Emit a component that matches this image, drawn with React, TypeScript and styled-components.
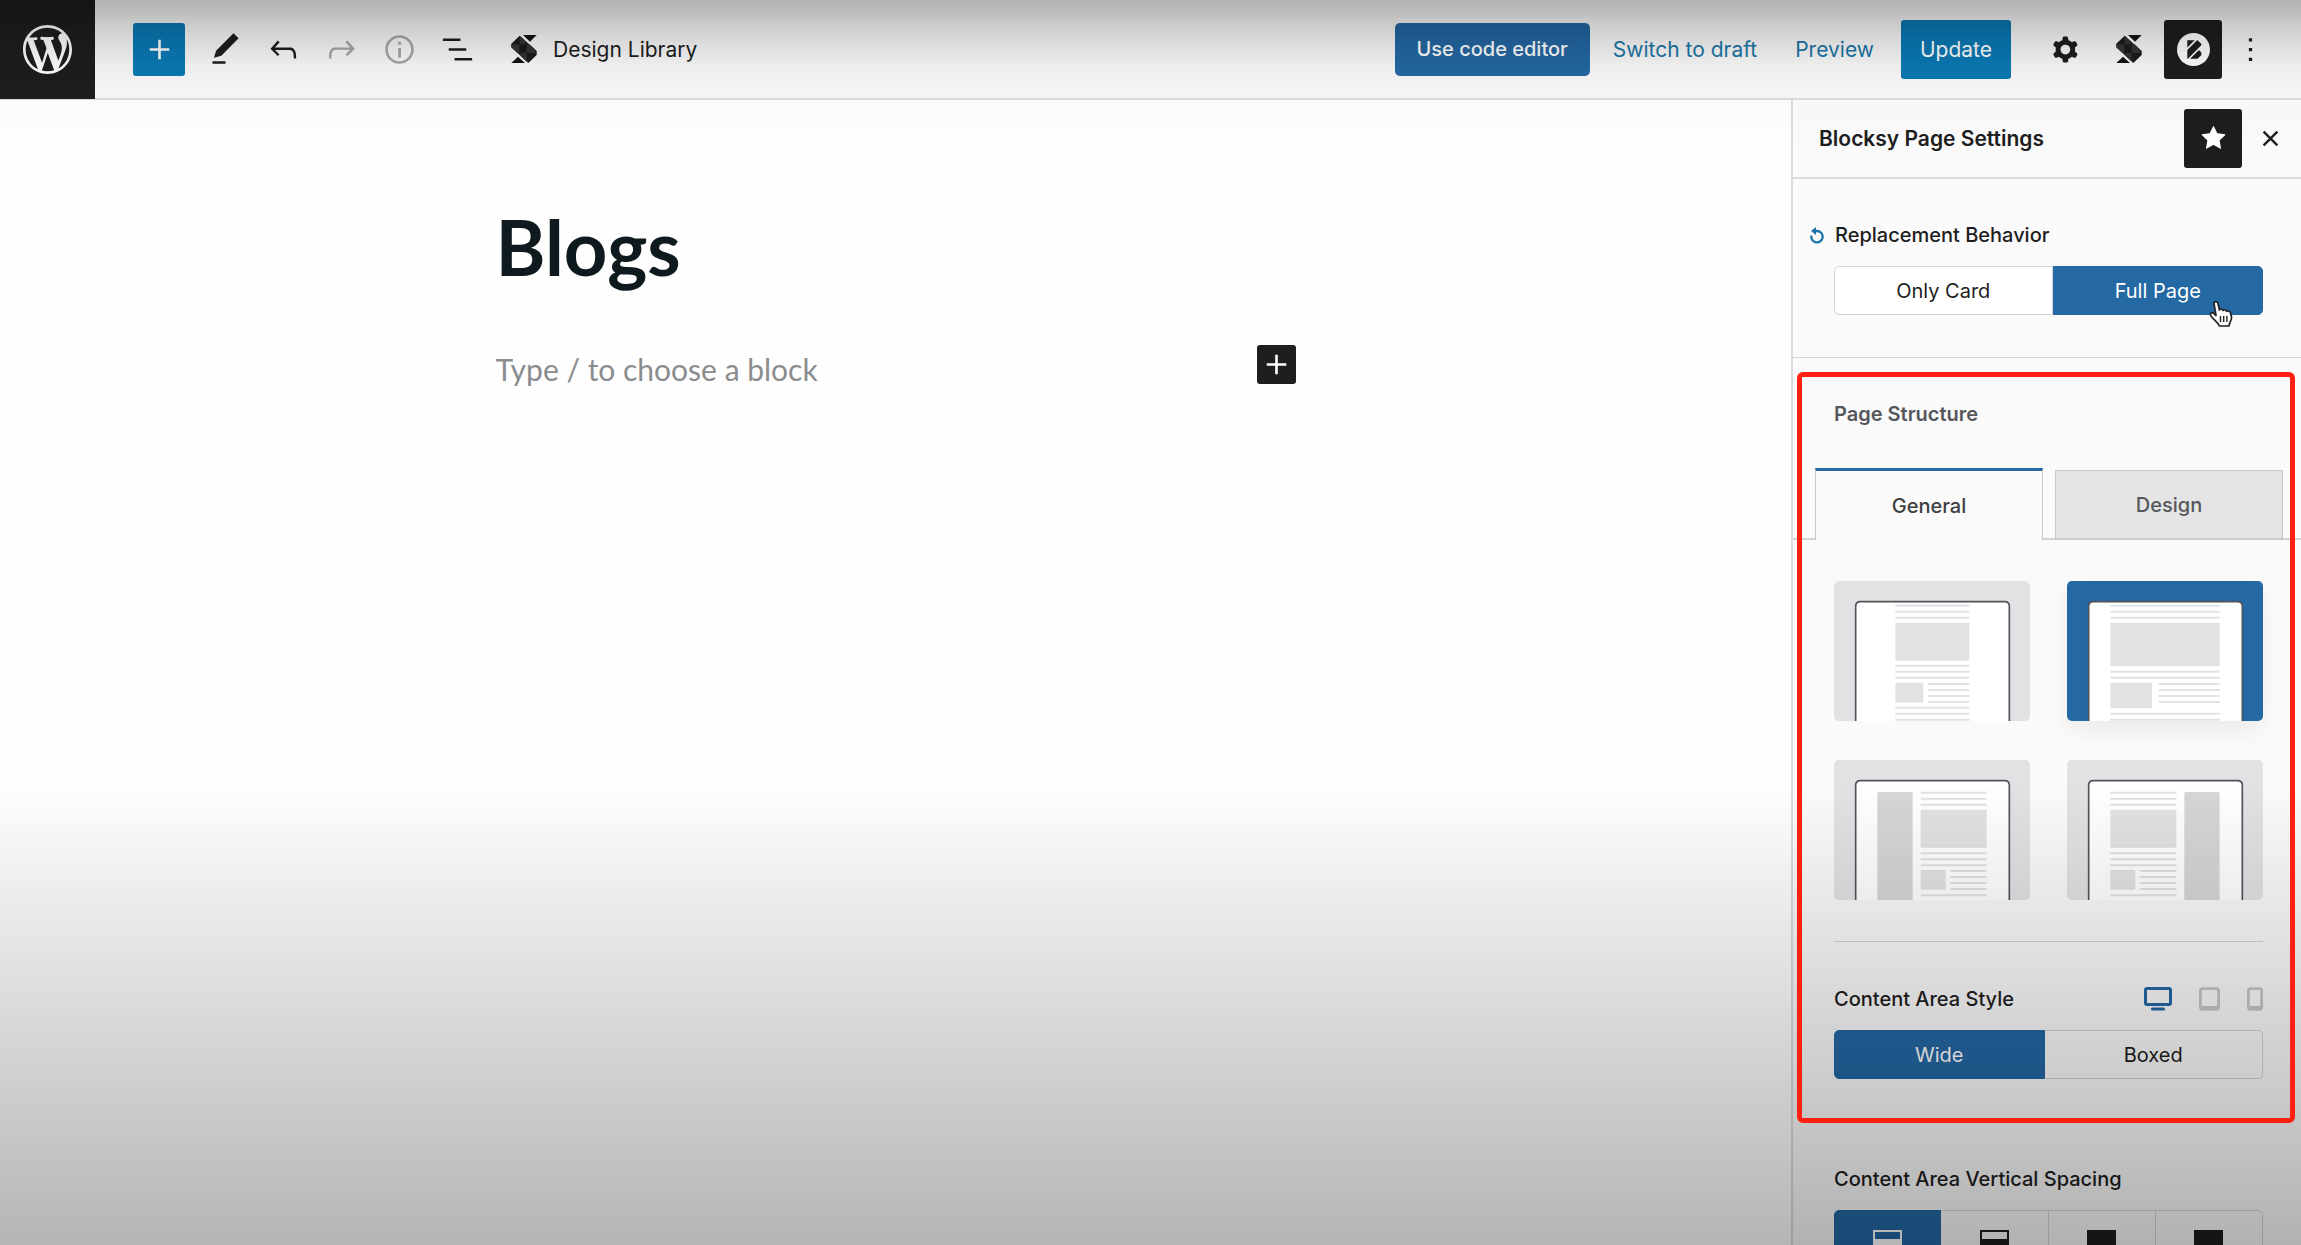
import React from "react";
import styled, { createGlobalStyle, css } from "styled-components";

const ink = "#1e1e1e";
const blue = "#2468a4";
const line = "#dcdcdc";

const GlobalStyle = createGlobalStyle`
  *, *::before, *::after { box-sizing: border-box; }
  body { margin: 0; background: #fefefe; }
  body, button, input { font-family: Inter, Roboto, "Liberation Sans", sans-serif; }
  button { margin: 0; padding: 0; border: 0; background: none; color: inherit; cursor: pointer; }
  h1, h2, h3, p { margin: 0; }
  svg { display: block; }
`;

const Page = styled.div`
  display: flex;
  flex-direction: column;
  height: 100vh;
  overflow: hidden;
  color: ${ink};
`;

const Shade = styled.div`
  position: fixed;
  inset: 0;
  z-index: 10;
  pointer-events: none;
  background:
    linear-gradient(rgba(0, 0, 0, 0.29), rgba(0, 0, 0, 0.14) 36px, rgba(0, 0, 0, 0.05) 66px, rgba(0, 0, 0, 0.01) 100px, transparent 150px),
    linear-gradient(transparent 63%, rgba(0, 0, 0, 0.285));
`;

const TopBar = styled.header`
  display: flex;
  align-items: center;
  justify-content: space-between;
  flex: none;
  height: 100px;
  padding-right: 31px;
  background: #fafafa;
  border-bottom: 2px solid ${line};
`;

const BarGroup = styled.div`
  display: flex;
  align-items: center;
`;

const Home = styled.a`
  display: grid;
  place-items: center;
  width: 95px;
  height: 99px;
  margin-right: 38px;
  background: ${ink};
  color: #fff;
`;

const IconButton = styled.button<{ $dim?: boolean; $dark?: boolean; $narrow?: boolean }>`
  display: grid;
  place-items: center;
  width: ${(p) => (p.$narrow ? 40 : 58)}px;
  height: 59px;
  border-radius: 3px;
  color: ${(p) => (p.$dark ? "#fff" : p.$dim ? "#a8a8a8" : ink)};
  ${(p) => p.$dark && css`background: ${ink};`}
`;

const AddButton = styled.button<{ $dark?: boolean }>`
  display: grid;
  place-items: center;
  flex: none;
  width: ${(p) => (p.$dark ? 39 : 52)}px;
  height: ${(p) => (p.$dark ? 39 : 53)}px;
  border-radius: 3px;
  background: ${(p) => (p.$dark ? ink : "#0a7ab5")};
  color: #fff;
`;

const Tools = styled.div`
  display: flex;
  margin-left: 11px;
`;

const Library = styled.button`
  display: flex;
  align-items: center;
  gap: 16px;
  margin-left: 25px;
  font-size: 21px;
`;

const Primary = styled.button<{ $tall?: boolean }>`
  height: ${(p) => (p.$tall ? 59 : 53)}px;
  padding: 0 ${(p) => (p.$tall ? 19 : 22)}px;
  border-radius: ${(p) => (p.$tall ? 3 : 5)}px;
  background: ${(p) => (p.$tall ? "#0a7ab5" : blue)};
  color: #fff;
  font-size: ${(p) => (p.$tall ? 21 : 20)}px;
  font-weight: ${(p) => (p.$tall ? 400 : 500)};
`;

const BarLink = styled.a`
  color: #1a76a8;
  font-size: 21px;
  text-decoration: none;
`;

const Actions = styled.div`
  display: flex;
  align-items: center;
  gap: 23px;
  margin-right: 25px;
  ${BarLink} + ${BarLink} { margin-left: 15px; }
  ${Primary}:last-child { margin-left: 4px; }
`;

const Spacer = styled.span<{ $wide?: boolean }>`
  flex: none;
  width: ${(p) => (p.$wide ? 8 : 6)}px;
`;

const Workspace = styled.div`
  display: flex;
  flex: 1;
  min-height: 0;
`;

const Canvas = styled.main`
  flex: 1;
  min-width: 0;
  padding-top: 102px;
`;

const Post = styled.article`
  display: flex;
  flex-direction: column;
  gap: 53px;
  max-width: 800px;
  margin: 0 auto;
  font-family: Lato, "Open Sans", sans-serif;
`;

const PostTitle = styled.h1`
  font-size: 76px;
  line-height: 90px;
  font-weight: 700;
  color: #0f1a1f;
`;

const BlockRow = styled.div`
  display: flex;
  align-items: flex-start;
  justify-content: space-between;
`;

const Prompt = styled.input`
  flex: 1;
  min-width: 0;
  height: 48px;
  padding: 0;
  border: 0;
  outline: 0;
  background: none;
  font-family: inherit;
  font-size: 30px;
  &::placeholder { color: #8a8c8d; opacity: 1; }
`;

const Sidebar = styled.aside`
  flex: none;
  width: 510px;
  overflow: hidden;
  background: #fafafa;
  border-left: 2px solid ${line};
`;

const SideHeader = styled.div`
  display: flex;
  align-items: center;
  height: 79px;
  padding: 0 11px 0 26px;
  border-bottom: 2px solid ${line};
`;

const SideTitle = styled.h2`
  flex: 1;
  font-size: 21px;
  font-weight: 600;
`;

const Section = styled.section<{ $ruled?: boolean }>`
  position: relative;
  padding: 42px 38px 44px 41px;
  ${(p) => p.$ruled && css`
    padding-bottom: 42px;
    border-bottom: 1px solid #d3d4d6;
  `}
`;

const LabelRow = styled.div`
  display: flex;
  align-items: center;
  justify-content: space-between;
  height: 28px;
  margin-bottom: 17px;
`;

const Label = styled.h3<{ $soft?: boolean }>`
  display: flex;
  align-items: center;
  font-size: 20px;
  line-height: 28px;
  font-weight: ${(p) => (p.$soft ? 600 : 500)};
  color: ${(p) => (p.$soft ? "#55575a" : ink)};
`;

const Reset = styled.button`
  margin: 0 10px 0 -25px;
  color: #1a76a8;
`;

const Segments = styled.div`
  position: relative;
  display: flex;
`;

const Segment = styled.button<{ $on?: boolean; $tall?: boolean; $plain?: boolean }>`
  display: flex;
  justify-content: center;
  align-items: ${(p) => (p.$tall ? "flex-start" : "center")};
  flex: 1 1 ${(p) => (p.$tall ? 100 : p.$on ? 208 : 216)}px;
  height: ${(p) => (p.$tall ? 60 : 49)}px;
  padding-top: ${(p) => (p.$tall ? 19 : 0)}px;
  border: 1px solid ${(p) => (p.$on ? blue : "#d3d4d6")};
  background: ${(p) => (p.$on ? blue : p.$plain ? "#fafafa" : "#fff")};
  color: ${(p) => (p.$on ? "#fff" : ink)};
  font-size: 20px;
  &:first-child { border-radius: 5px 0 0 5px; }
  &:nth-of-type(n + 2) { border-left-width: ${(p) => (p.$on ? 1 : 0)}px; }
  &:last-of-type { border-radius: 0 5px 5px 0; }
`;

const Pointer = styled.svg`
  position: absolute;
  top: 34px;
  right: 29px;
`;

const TabBar = styled.div`
  display: flex;
  gap: 12px;
  margin: 40px -38px 0 -41px;
  padding: 0 18px 0 22px;
  background: linear-gradient(#d3d4d6, #d3d4d6) bottom / 100% 2px no-repeat;
`;

const Tab = styled.button<{ $on?: boolean }>`
  flex: 1;
  height: ${(p) => (p.$on ? 72 : 70)}px;
  align-self: flex-end;
  border: 1px solid #c9cacc;
  border-bottom: ${(p) => (p.$on ? "0" : "2px solid #c9cacc")};
  background: ${(p) => (p.$on ? "#fafafa" : "#e5e5e6")};
  color: ${(p) => (p.$on ? "#3c3e41" : "#55585b")};
  font-size: 20px;
  font-weight: 500;
  ${(p) => p.$on && css`border-top: 3px solid ${blue};`}
`;

const Layouts = styled.div`
  display: grid;
  grid-template-columns: 1fr 1fr;
  gap: 39px 37px;
  margin: 41px 0;
`;

const LayoutButton = styled.button<{ $on?: boolean }>`
  aspect-ratio: 196 / 140;
  overflow: hidden;
  border-radius: 5px;
  background: ${(p) => (p.$on ? blue : "#e1e2e4")};
  ${(p) => p.$on && css`box-shadow: 0 10px 20px rgba(0, 0, 0, 0.06);`}
  svg { width: 100%; height: 100%; }
`;

const Rule = styled.hr`
  height: 1px;
  margin: 0 0 43px;
  border: 0;
  background: #d3d4d6;
`;

const Devices = styled.div`
  display: flex;
  align-items: center;
  gap: 27px;
`;

const Device = styled.button<{ $on?: boolean }>`
  color: ${(p) => (p.$on ? blue : "#c6c7c9")};
`;

const Highlight = styled.div`
  position: absolute;
  z-index: 20;
  inset: 14px 6px 0 4px;
  border: 5px solid #ff2012;
  border-radius: 6px;
  pointer-events: none;
`;

const paths = {
  plus: "M18 11.2h-5.2V6h-1.6v5.2H6v1.6h5.2V18h1.6v-5.2H18z",
  edit: "M20.1 5.1L16.9 2 6.2 12.7l-1.3 4.4 4.5-1.3L20.1 5.1zM4 20.8h8v-1.5H4v1.5z",
  undo: "M18.3 11.7c-.6-.6-1.4-.9-2.3-.9H6.7l2.9-3.3-1.1-1-4.5 5L8.5 16l1-1-2.7-2.7H16c.5 0 .9.2 1.3.5 1 1 1 3.4 1 4.5v.3h1.5v-.2c0-1.5 0-4.3-1.5-5.7z",
  redo: "M15.6 6.5l-1.1 1 2.9 3.3H8c-.9 0-1.7.3-2.3.9-1.4 1.5-1.4 4.2-1.4 5.6v.2h1.5v-.3c0-1.1 0-3.5 1-4.5.3-.3.7-.5 1.3-.5h9.2L14.5 15l1.1 1.1 4.6-4.6-4.6-5z",
  info: "M12 3.2c-4.8 0-8.8 3.9-8.8 8.8 0 4.8 3.9 8.8 8.8 8.8 4.8 0 8.8-3.9 8.8-8.8 0-4.8-4-8.8-8.8-8.8zm0 16c-4 0-7.2-3.3-7.2-7.2C4.8 8 8 4.8 12 4.8s7.2 3.3 7.2 7.2c0 4-3.2 7.2-7.2 7.2zM11.2 17h1.7v-6h-1.7v6zm0-8h1.7V7.2h-1.7V9z",
  list: "M13.8 5.2H3v1.5h10.8V5.2zm-3.6 12v1.5H21v-1.5H10.2zm7.2-6H6.6v1.5h10.8v-1.5z",
  cog: "M10.289 4.836A1 1 0 0111.275 4h1.306a1 1 0 01.987.836l.244 1.466c.787.26 1.503.679 2.108 1.218l1.393-.522a1 1 0 011.216.437l.653 1.13a1 1 0 01-.23 1.273l-1.148.944a6.025 6.025 0 010 2.435l1.149.946a1 1 0 01.23 1.272l-.653 1.13a1 1 0 01-1.216.437l-1.394-.522c-.605.54-1.32.958-2.108 1.218l-.244 1.466a1 1 0 01-.987.836h-1.306a1 1 0 01-.986-.836l-.244-1.466a5.995 5.995 0 01-2.108-1.218l-1.394.522a1 1 0 01-1.217-.436l-.653-1.131a1 1 0 01.23-1.272l1.149-.946a6.026 6.026 0 010-2.435l-1.148-.944a1 1 0 01-.23-1.272l.653-1.131a1 1 0 011.217-.437l1.393.522a5.994 5.994 0 012.108-1.218l.244-1.466zM14.929 12a3 3 0 11-6 0 3 3 0 016 0z",
  more: "M13 19h-2v-2h2v2zm0-6h-2v-2h2v2zm0-6h-2V5h2v2z",
  star: "M11.776 4.454a.25.25 0 01.448 0l2.069 4.192a.25.25 0 00.188.137l4.626.672a.25.25 0 01.139.426l-3.348 3.263a.25.25 0 00-.072.222l.79 4.607a.25.25 0 01-.362.263l-4.138-2.175a.25.25 0 00-.232 0l-4.138 2.175a.25.25 0 01-.363-.263l.79-4.607a.25.25 0 00-.071-.222L4.754 9.881a.25.25 0 01.139-.426l4.626-.672a.25.25 0 00.188-.137l2.069-4.192z",
  close: "M12 13.06l3.712 3.713 1.061-1.06L13.061 12l3.712-3.712-1.06-1.06L12 10.938 8.288 7.227l-1.061 1.06L10.939 12l-3.712 3.712 1.06 1.061L12 13.061z",
};

const Icon = ({ name, size = 39 }: { name: keyof typeof paths; size?: number }) => (
  <svg width={size} height={size} viewBox="0 0 24 24" fill="currentColor" fillRule="evenodd" aria-hidden="true">
    <path d={paths[name]} />
  </svg>
);

const WordPressMark = () => (
  <svg width="49" height="49" viewBox="0 0 20 20" fill="currentColor" aria-hidden="true">
    <path d="M20 10c0-5.51-4.49-10-10-10C4.48 0 0 4.49 0 10c0 5.52 4.48 10 10 10 5.51 0 10-4.48 10-10zM7.78 15.37L4.37 6.22c.55-.02 1.17-.08 1.17-.08.5-.06.44-1.13-.06-1.11 0 0-1.45.11-2.37.11-.18 0-.37 0-.58-.01C4.12 2.69 6.87 1.11 10 1.11c2.33 0 4.45.87 6.05 2.34-.68-.11-1.65.39-1.65 1.58 0 .74.45 1.36.9 2.1.35.61.55 1.36.55 2.46 0 1.49-1.4 5-1.4 5l-3.03-8.37c.54-.02.82-.17.82-.17.5-.05.44-1.25-.06-1.22 0 0-1.44.12-2.38.12-.87 0-2.33-.12-2.33-.12-.5-.03-.56 1.2-.06 1.22l.92.08 1.26 3.41zM17.41 10c.24-.64.74-1.87.43-4.25.7 1.29 1.05 2.71 1.05 4.25 0 3.29-1.73 6.24-4.4 7.78.97-2.59 1.94-5.2 2.92-7.78zM6.1 18.09C3.12 16.65 1.11 13.53 1.11 10c0-1.3.23-2.48.72-3.59C3.25 10.3 4.67 14.2 6.1 18.09zm4.03-6.63l2.58 6.98c-.86.29-1.76.45-2.71.45-.79 0-1.57-.11-2.29-.33.81-2.38 1.62-4.74 2.42-7.1z" />
  </svg>
);

const StackMark = () => (
  <svg width="26" height="28" viewBox="0 0 76 84" aria-hidden="true">
    <path d="M35 0H76L56 20Z" fill="#141414" />
    <path d="M0 84L20 65L41 84Z" fill="#141414" />
    <path d="M25 2L0 26V37L51 84L76 60V48Z" fill="#1c1c1c" />
    <path d="M25 2L42 18V28H25ZM0 28H24V54H18L0 37ZM46 28H55L72 44V54H46ZM28 54H46V80L28 63Z" fill="#353535" />
  </svg>
);

const BlocksyMark = () => (
  <svg width="33" height="33" viewBox="0 0 96 96" aria-hidden="true">
    <circle cx="48" cy="48" r="48" fill="#fff" />
    <path d="M30 21H60L71 32V39L62 48L71 57V64L60 75H30Z" fill={ink} />
    <path d="M26 50L58 18M30 80L76 34" stroke="#fff" strokeWidth="5" />
  </svg>
);

const ResetMark = () => (
  <svg width="16" height="17" viewBox="0 0 16 17" fill="none" aria-hidden="true">
    <path d="M5 4H8.500A5.700 5.700 0 1 1 2.400 8.500" stroke="currentColor" strokeWidth="2.300" />
    <path d="M7 0V8L2 4Z" fill="currentColor" />
  </svg>
);

const HandPointer = () => (
  <Pointer width="26" height="28" viewBox="0 0 26 28" aria-hidden="true">
    <path
      d="M6 3.500C6 1 9.500 1 10 3.500L11.500 10C12 8.500 14.500 8.700 15 10.500C15.700 9.300 18 9.500 18.500 11.300C19.700 10.300 22 11 22.500 13L23.500 17C24 20 21.500 22 21 26H11.500C10 22.500 6 20 3 16C1.500 13.500 3.500 12 5.500 13.200L8 15.500Z"
      fill="#fff"
      stroke="#222"
      strokeWidth="1.700"
      strokeLinejoin="round"
    />
    <path d="M12.500 16V22M15.700 16V22M18.900 16V22" stroke="#222" strokeWidth="1.400" />
  </Pointer>
);

const Monitor = () => (
  <svg width="28" height="24" viewBox="0 0 28 24" fill="none" stroke="currentColor" aria-hidden="true">
    <rect x="1.500" y="1.500" width="25" height="16" rx="1.500" strokeWidth="3" />
    <path d="M8.500 22H19.500" strokeWidth="3.200" strokeLinecap="round" />
  </svg>
);

const Slate = ({ width }: { width: number }) => (
  <svg width={width} height="24" viewBox={`0 0 ${width} 24`} fill="none" stroke="currentColor" aria-hidden="true">
    <rect x="1.400" y="1.700" width={width - 2.8} height="20.600" rx="2" strokeWidth="2.800" />
    <path d={`M2 21H${width - 2}`} strokeWidth="4" />
  </svg>
);

type Sketch = {
  left: number;
  right: number;
  top: number;
  hero: number;
  split: [number, number];
  photo: number;
  between: number[];
  tail: number[];
  rail?: number;
};

const sketches: { name: string; on?: boolean; sketch: Sketch }[] = [
  { name: "Narrow", sketch: { left: 184, right: 406, top: 74, hero: 114, split: [268, 283], photo: 60, between: [254, 272, 290], tail: [380, 398, 416] } },
  { name: "Normal", on: true, sketch: { left: 130, right: 458, top: 74, hero: 131, split: [255, 275], photo: 77, between: [272, 290], tail: [398, 416] } },
  { name: "Left sidebar", sketch: { left: 260, right: 458, top: 98, hero: 114, split: [335, 349], photo: 60, between: [280, 298, 316], tail: [406], rail: 130 } },
  { name: "Right sidebar", sketch: { left: 130, right: 328, top: 98, hero: 114, split: [205, 218], photo: 60, between: [280, 298, 316], tail: [406], rail: 352 } },
];

const LayoutSketch = ({ sketch: s }: { sketch: Sketch }) => {
  const bar = (y: number, from = s.left) => <path key={`${from}-${y}`} d={`M${from} ${y}H${s.right}`} />;
  const photoTop = s.top + 231;
  return (
    <svg viewBox="0 0 588 420" aria-hidden="true">
      <path d="M65 430V76Q65 62 79 62H512Q526 62 526 76V430Z" fill="#fff" stroke="#50545a" strokeWidth="5" />
      <g fill="#e1e2e4">
        <rect x={s.left} y={s.top + 51} width={s.right - s.left} height={s.hero} rx="3" />
        <rect x={s.left} y={photoTop} width={s.split[0] - s.left} height={s.photo} rx="3" />
        {s.rail && <rect x={s.rail} y={s.top - 2} width="106" height="340" rx="5" fill="#d5d6d8" />}
      </g>
      <g stroke="#e1e2e4" strokeWidth="6">
        {[0, 18, 36].map((d) => bar(s.top + d))}
        {s.between.map((y) => bar(y))}
        {[4, 22, 40, 58].map((d) => bar(photoTop + d, s.split[1]))}
        {s.tail.map((y) => bar(y))}
      </g>
    </svg>
  );
};

const spacings = [
  { name: "Top and bottom", filled: false },
  { name: "Only bottom", filled: false },
  { name: "Only top", filled: true },
  { name: "Disabled", filled: true },
];

const SpacingMark = ({ filled }: { filled: boolean }) => (
  <svg width="29" height="34" viewBox="0 0 29 34" aria-hidden="true">
    <path d="M1 1H28V33H1Z" fill={filled ? "currentColor" : "none"} stroke="currentColor" strokeWidth="2" />
    <path d="M1 9H28V33H1Z" fill="currentColor" />
  </svg>
);

export default function App() {
  return (
    <Page>
      <GlobalStyle />
      <TopBar>
        <BarGroup>
          <Home href="#" aria-label="View pages"><WordPressMark /></Home>
          <AddButton aria-label="Add block"><Icon name="plus" /></AddButton>
          <Tools>
            <IconButton aria-label="Edit"><Icon name="edit" /></IconButton>
            <IconButton aria-label="Undo"><Icon name="undo" /></IconButton>
            <IconButton $dim aria-label="Redo"><Icon name="redo" /></IconButton>
            <IconButton $dim aria-label="Details"><Icon name="info" /></IconButton>
            <IconButton aria-label="List view"><Icon name="list" /></IconButton>
          </Tools>
          <Library><StackMark />Design Library</Library>
        </BarGroup>
        <BarGroup>
          <Actions>
            <Primary>Use code editor</Primary>
            <BarLink href="#">Switch to draft</BarLink>
            <BarLink href="#">Preview</BarLink>
            <Primary $tall>Update</Primary>
          </Actions>
          <IconButton aria-label="Settings"><Icon name="cog" /></IconButton>
          <Spacer />
          <IconButton aria-label="Stackable"><StackMark /></IconButton>
          <Spacer />
          <IconButton $dark aria-label="Blocksy"><BlocksyMark /></IconButton>
          <Spacer $wide />
          <IconButton $narrow aria-label="Options"><Icon name="more" /></IconButton>
        </BarGroup>
      </TopBar>
      <Workspace>
        <Canvas>
          <Post>
            <PostTitle>Blogs</PostTitle>
            <BlockRow>
              <Prompt aria-label="Block" placeholder="Type / to choose a block" />
              <AddButton $dark aria-label="Add block"><Icon name="plus" /></AddButton>
            </BlockRow>
          </Post>
        </Canvas>
        <Sidebar>
          <SideHeader>
            <SideTitle>Blocksy Page Settings</SideTitle>
            <IconButton $dark aria-label="Pin"><Icon name="star" /></IconButton>
            <Spacer $wide />
            <IconButton $narrow aria-label="Close"><Icon name="close" /></IconButton>
          </SideHeader>
          <Section $ruled>
            <LabelRow>
              <Label><Reset aria-label="Reset"><ResetMark /></Reset>Replacement Behavior</Label>
            </LabelRow>
            <Segments>
              <Segment>Only Card</Segment>
              <Segment $on>Full Page</Segment>
              <HandPointer />
            </Segments>
          </Section>
          <Section>
            <Label $soft>Page Structure</Label>
            <TabBar role="tablist">
              <Tab $on role="tab" aria-selected="true">General</Tab>
              <Tab role="tab" aria-selected="false">Design</Tab>
            </TabBar>
            <Layouts>
              {sketches.map((item) => (
                <LayoutButton key={item.name} $on={item.on} aria-label={item.name}>
                  <LayoutSketch sketch={item.sketch} />
                </LayoutButton>
              ))}
            </Layouts>
            <Rule />
            <LabelRow>
              <Label>Content Area Style</Label>
              <Devices>
                <Device $on aria-label="Desktop"><Monitor /></Device>
                <Device aria-label="Tablet"><Slate width={21} /></Device>
                <Device aria-label="Phone"><Slate width={16} /></Device>
              </Devices>
            </LabelRow>
            <Segments>
              <Segment $on $plain>Wide</Segment>
              <Segment $plain>Boxed</Segment>
            </Segments>
            <Highlight />
          </Section>
          <Section>
            <LabelRow>
              <Label>Content Area Vertical Spacing</Label>
            </LabelRow>
            <Segments>
              {spacings.map((item, i) => (
                <Segment key={item.name} $tall $plain $on={i === 0} aria-label={item.name}>
                  <SpacingMark filled={item.filled} />
                </Segment>
              ))}
            </Segments>
          </Section>
        </Sidebar>
      </Workspace>
      <Shade />
    </Page>
  );
}
